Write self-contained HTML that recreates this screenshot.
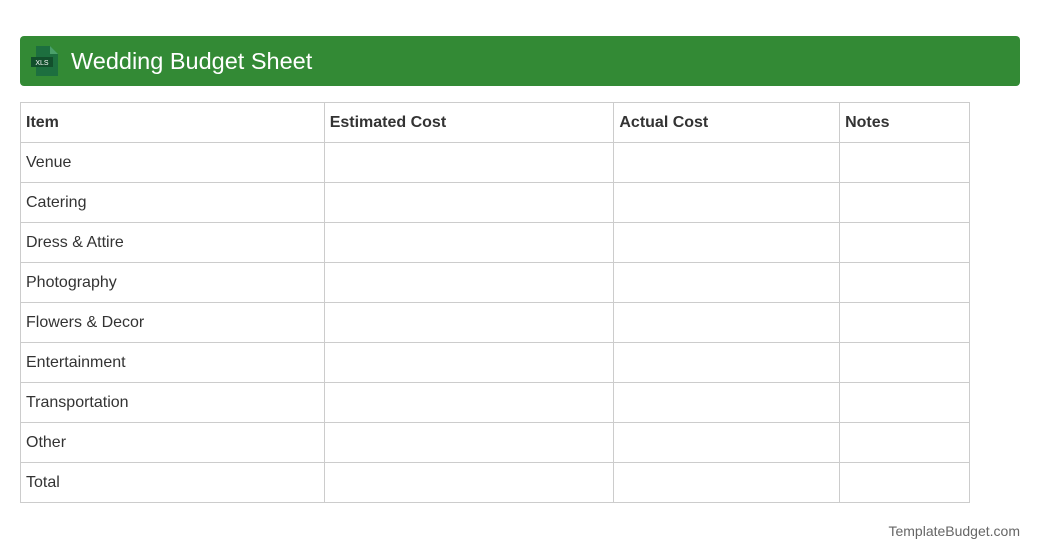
<!DOCTYPE html>
<html><head><style>
body{margin:0;width:1040px;height:560px;background:#fff;font-family:"Liberation Sans",sans-serif;position:relative;overflow:hidden}
.hdr{position:absolute;left:20px;top:36px;width:1000px;height:50px;background:#338a35;border-radius:4px}
.hdr .t{position:absolute;left:51px;top:12px;font-size:23.5px;color:#fff}
table{position:absolute;left:20px;top:102px;border-collapse:collapse;width:950px}
td,th{border:1px solid #ccc;height:39px;padding:0 5px;font-size:16px;color:#333;text-align:left}
th{font-weight:bold}
.f{position:absolute;right:20px;top:523px;font-size:14px;color:#666}
</style></head><body>
<div class="hdr">
<svg style="position:absolute;left:10px;top:9px" width="30" height="32" viewBox="0 0 30 32">
<path d="M6 1h14l8 8v22H6z" fill="#1d6f3f"/><path d="M20 1v8h8z" fill="#4aa06a"/>
<rect x="1" y="12" width="22" height="10" fill="#124f2c"/>
<text x="12" y="20" font-size="7" fill="#fff" text-anchor="middle" font-family="Liberation Sans">XLS</text>
</svg>
<div class="t">Wedding Budget Sheet</div></div>
<table>
<colgroup><col style="width:304px"><col style="width:290px"><col style="width:226px"><col style="width:130px"></colgroup>
<tr><th>Item</th><th>Estimated Cost</th><th>Actual Cost</th><th>Notes</th></tr>
<tr><td>Venue</td><td></td><td></td><td></td></tr>
<tr><td>Catering</td><td></td><td></td><td></td></tr>
<tr><td>Dress &amp; Attire</td><td></td><td></td><td></td></tr>
<tr><td>Photography</td><td></td><td></td><td></td></tr>
<tr><td>Flowers &amp; Decor</td><td></td><td></td><td></td></tr>
<tr><td>Entertainment</td><td></td><td></td><td></td></tr>
<tr><td>Transportation</td><td></td><td></td><td></td></tr>
<tr><td>Other</td><td></td><td></td><td></td></tr>
<tr><td>Total</td><td></td><td></td><td></td></tr>
</table>
<div class="f">TemplateBudget.com</div>
</body></html>
